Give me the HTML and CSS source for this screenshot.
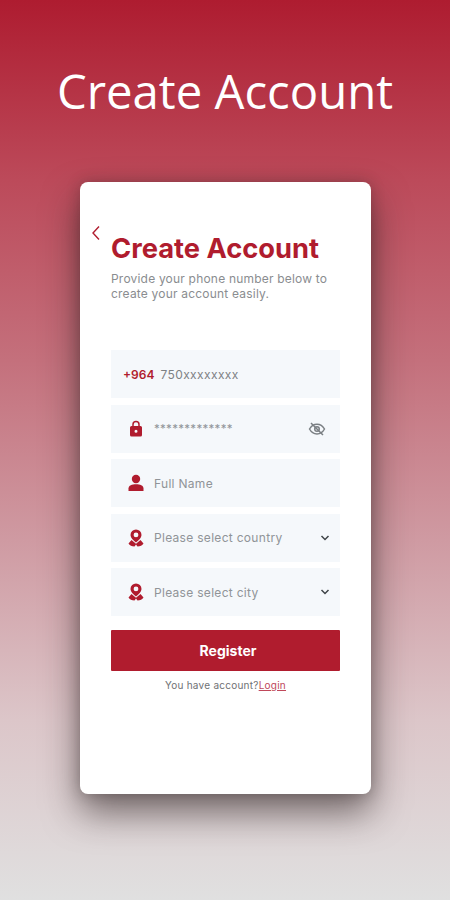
FILE: index.html
```html
<!DOCTYPE html>
<html lang="en">
<head>
  <meta charset="UTF-8" />
  <title>Create Account</title>
  <link rel="stylesheet" href="styles.css">
</head>
<body>
  <h1 class="banner">Create Account</h1>

  <div class="card">
    <svg class="back" width="10" height="16" viewBox="0 0 10 16"><path d="M8 1.5 2 8l6 6.500" fill="none" stroke="#b01c2e" stroke-width="1.400"/></svg>
    <h2 class="title">Create Account</h2>
    <p class="sub">Provide your phone number below to create your account easily.</p>

    <div class="form-group">
      <div class="field">
        <span class="code">+964</span>
        <span class="phone">750xxxxxxxx</span>
      </div>

      <div class="field">
        <svg class="icon" width="18" height="18" viewBox="0 0 24 24"><path d="M18 8h-1V6a5 5 0 0 0-10 0v2H6a2 2 0 0 0-2 2v10a2 2 0 0 0 2 2h12a2 2 0 0 0 2-2V10a2 2 0 0 0-2-2zM9 6a3 3 0 0 1 6 0v2H9V6zm3 11a2 2 0 1 1 0-4 2 2 0 0 1 0 4z" fill="#b01c2e"/></svg>
        <span class="hint stars">*************</span>
        <svg class="eye" width="18" height="18" viewBox="0 0 24 24" fill="none" stroke="#7a7f83" stroke-width="2"><path d="M2 12s3.600-6.500 10-6.500S22 12 22 12s-3.600 6.500-10 6.500S2 12 2 12z"/><circle cx="12" cy="12" r="3"/><path d="M4 4l16 16"/></svg>
      </div>

      <div class="field">
        <svg class="icon" width="18" height="18" viewBox="0 0 18 18"><circle cx="9" cy="5" r="4.200" fill="#b01c2e"/><path d="M1.500 17v-2.500C1.500 11.500 5 10.200 9 10.200s7.500 1.300 7.500 4.300V17z" fill="#b01c2e"/></svg>
        <span class="hint">Full Name</span>
      </div>

      <div class="field">
        <svg class="icon" width="18" height="18" viewBox="0 0 18 18"><path d="M9 0.500a5.500 5.500 0 0 0-5.500 5.500C3.500 9.600 9 13.500 9 13.500s5.500-3.900 5.500-7.500A5.500 5.500 0 0 0 9 0.500zm0 7.800a2.400 2.400 0 1 1 0-4.800 2.400 2.400 0 0 1 0 4.800z" fill="#b01c2e"/><path d="M4.500 11 1.500 14.500C2.500 16.500 5 17.500 7.500 17.500L9 15.500l1.500 2c2.500 0 5-1 6-3L13.500 11 9 14.800z" fill="#b01c2e"/></svg>
        <span class="hint">Please select country</span>
        <svg class="chev" width="10" height="6" viewBox="0 0 10 6"><path d="M1.500 1 5 4.500 8.500 1" fill="none" stroke="#3f4448" stroke-width="1.500"/></svg>
      </div>

      <div class="field">
        <svg class="icon" width="18" height="18" viewBox="0 0 18 18"><path d="M9 0.500a5.500 5.500 0 0 0-5.500 5.500C3.500 9.600 9 13.500 9 13.500s5.500-3.900 5.500-7.500A5.500 5.500 0 0 0 9 0.500zm0 7.800a2.400 2.400 0 1 1 0-4.800 2.400 2.400 0 0 1 0 4.800z" fill="#b01c2e"/><path d="M4.500 11 1.500 14.500C2.500 16.500 5 17.500 7.500 17.500L9 15.500l1.500 2c2.500 0 5-1 6-3L13.500 11 9 14.800z" fill="#b01c2e"/></svg>
        <span class="hint">Please select city</span>
        <svg class="chev" width="10" height="6" viewBox="0 0 10 6"><path d="M1.500 1 5 4.500 8.500 1" fill="none" stroke="#3f4448" stroke-width="1.500"/></svg>
      </div>
    </div>

    <button class="register">Register</button>
    <p class="login">You have account?<a href="#">Login</a></p>
  </div>
</body>
</html>
```

FILE: styles.css
```css
html, body {
  height: 100%;
}

body {
  margin: 0;
  height: 900px;
  overflow: hidden;
  font-family: Inter, 'Liberation Sans', sans-serif;
  background: linear-gradient(180deg, #ae1c30 0%, #bc4a5a 20%, #c4707c 40%, #cf9aa2 60%, #dcc6c9 80%, #e0e0e0 100%);
}

.banner {
  margin: 0;
  padding-top: 61px;
  height: 121px;
  text-align: center;
  font-family: 'Open Sans', sans-serif;
  font-size: 47.300px;
  line-height: 60px;
  font-weight: 400;
  color: #fff;
}

.card {
  position: relative;
  width: 291px;
  height: 612px;
  box-sizing: border-box;
  margin-left: 80px;
  padding: 52px 31px 0;
  background: #fff;
  border-radius: 8px;
  box-shadow: 0 18px 36px rgba(40, 30, 30, 0.6), 0 0 14px rgba(40, 30, 30, 0.25);
}

.back {
  position: absolute;
  left: 11px;
  top: 43px;
}

.title {
  margin: 0;
  font-size: 27.300px;
  line-height: 30px;
  font-weight: 700;
  color: #b01c2e;
}

.sub {
  margin: 7px 0 0;
  font-size: 12px;
  line-height: 15px;
  letter-spacing: 0.200px;
  color: #8a8d90;
  width: 225px;
}

.form-group {
  display: flex;
  flex-direction: column;
  gap: 6.500px;
  margin-top: 49px;
}

.field {
  display: flex;
  align-items: center;
  height: 48px;
  padding: 0 14px 0 16px;
  background: #f5f8fb;
}

.code {
  margin-left: -4px;
  font-size: 12px;
  font-weight: 600;
  color: #b01c2e;
}

.phone {
  margin-left: 6px;
  font-size: 12px;
  letter-spacing: 0.400px;
  color: #7d8184;
}

.icon {
  flex: none;
}

.hint {
  margin-left: 9px;
  font-size: 12px;
  letter-spacing: 0.300px;
  color: #909498;
}

.stars {
  font-size: 11.500px;
  letter-spacing: 0.300px;
}

.eye, .chev {
  margin-left: auto;
}

.chev {
  margin-right: -4px;
}

.register {
  display: block;
  width: 100%;
  height: 41px;
  margin-top: 13.500px;
  padding: 0 0 0 5px;
  border: none;
  border-radius: 1px;
  background: #b01c2e;
  color: #fff;
  font-family: inherit;
  font-size: 14px;
  font-weight: 700;
}

.login {
  margin: 7px 0 0;
  text-align: center;
  font-size: 10px;
  line-height: 14px;
  letter-spacing: 0.250px;
  color: #6f7275;
}

.login a {
  color: #c0485a;
}
```
